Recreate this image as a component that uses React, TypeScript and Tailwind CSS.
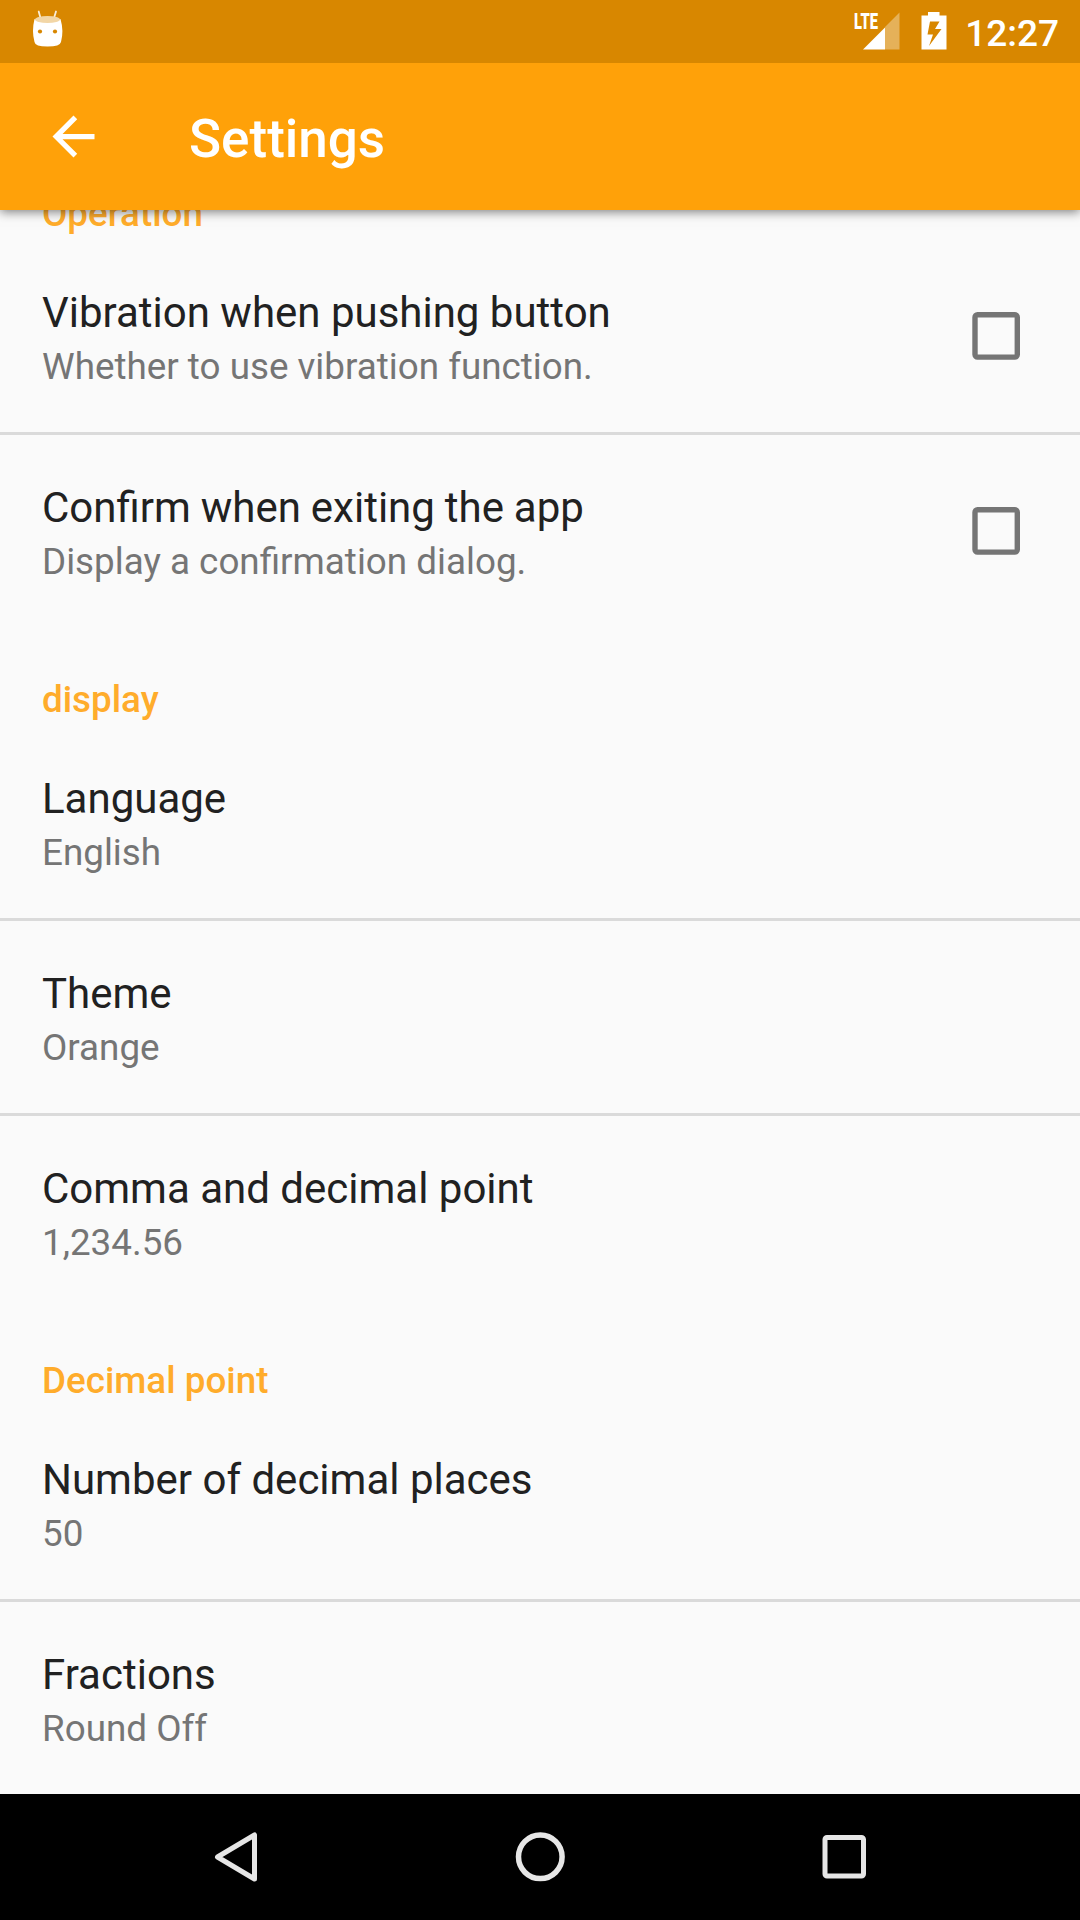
import React from "react";

function Category({ title, className = "" }: { title: string; className?: string }) {
  return (
    <div className={"shrink-0 px-[42px] text-[36.8px] font-medium leading-[43px] text-[#ffac2b] " + className}>
      {title}
    </div>
  );
}

type RowProps = {
  title: string;
  summary: string;
  checkbox?: boolean;
  divider?: boolean;
  titleClass?: string;
};

function Row({ title, summary, checkbox, divider, titleClass = "" }: RowProps) {
  return (
    <div className={"flex h-[195px] shrink-0 justify-between pl-[42px] pr-[60px] " + (divider ? "border-b-[3px] border-[#dadada]" : "")}>
      <div className="pt-[48px]">
        <div className={"text-[42px] leading-[49px] text-[#212121] whitespace-nowrap " + titleClass}>{title}</div>
        <div className="mt-[8px] text-[36.8px] leading-[43px] text-[#757575] whitespace-nowrap">{summary}</div>
      </div>
      {checkbox && (
        <svg className="mt-[72px] h-[48px] w-[48px]" viewBox="0 0 48 48" fill="none">
          <rect x="3" y="2.800" width="42.300" height="42.300" rx="2.500" stroke="#757575" strokeWidth="5.400" />
        </svg>
      )}
    </div>
  );
}

function DroidIcon() {
  return (
    <svg className="h-[63px] w-[63px]" viewBox="0 0 63 63" fill="none">
      <path d="M7.700 11.500 9.500 18M25 11.500 23 18" stroke="#fff" strokeOpacity="0.85" strokeWidth="1.800" strokeLinecap="round" />
      <path d="M3.500 19Q16.500 24 29.500 19Q33 31 30 42Q29 46.500 16.500 46.500Q4 46.500 3.500 42Q.5 31 3.500 19Z" fill="#fff" />
      <ellipse cx="16.500" cy="19.500" rx="12.500" ry="3.500" fill="#f2d6a6" />
      <circle cx="9" cy="31.500" r="2.100" fill="#d88700" />
      <circle cx="24" cy="31.500" r="2.100" fill="#d88700" />
    </svg>
  );
}

export default function App() {
  return (
    <div className="flex h-[1920px] w-[1080px] flex-col overflow-hidden bg-[#fafafa] font-['Roboto',sans-serif]">
      <div className="relative z-20 flex h-[63px] shrink-0 items-center justify-between bg-[#d88700] pl-[31px] pr-[21px] text-white">
        <DroidIcon />
        <div className="flex items-center">
          <div className="relative mr-[21px] h-[63px] w-[46px]">
            <svg className="h-[63px] w-[46px]" viewBox="0 0 46 63">
              <path d="M45.500 12.500V49.500H31V27Z" fill="#fff" fillOpacity=".35" />
              <path d="M31 27.500V49.500H9Z" fill="#fff" />
            </svg>
            <span className="absolute left-0 top-[10px] origin-left scale-x-[0.67] text-[22px] font-black leading-[24px]">LTE</span>
          </div>
          <svg className="mr-[18px] h-[63px] w-[26px]" viewBox="0 0 26 63">
            <path fillRule="evenodd" d="M7 12h11.500v3.500H25.500V49.500H.5V15.500H7ZM9 21.500 6.500 34.500h5.500L8 46 20.500 29h-6.500l4.500-7.500Z" fill="#fff" />
          </svg>
          <span className="mt-[3px] text-[37px] font-medium leading-[43px]">12:27</span>
        </div>
      </div>
      <header className="z-10 flex h-[147px] shrink-0 items-center bg-[#ffa109] pl-[42px] text-white shadow-[0_2px_10px_rgba(0,0,0,0.5)]">
        <svg className="mr-[84px] h-[63px] w-[63px]" viewBox="0 0 24 24" fill="#fff">
          <path d="M20 11H7.830l5.590-5.590L12 4l-8 8 8 8 1.410-1.410L7.830 13H20v-2z" />
        </svg>
        <h1 className="pt-[4px] text-[53px] font-medium leading-[62px]">Settings</h1>
      </header>
      <main className="flex min-h-0 grow flex-col overflow-hidden">
        <Category title="Operation" className="-mt-[18px] h-[48px]" />
        <Row title="Vibration when pushing button" summary="Whether to use vibration function." checkbox divider />
        <Row title="Confirm when exiting the app" summary="Display a confirmation dialog." checkbox titleClass="[word-spacing:-0.5px]" />
        <Category title="display" className="h-[96px] pt-[48px]" />
        <Row title="Language" summary="English" divider />
        <Row title="Theme" summary="Orange" divider />
        <Row title="Comma and decimal point" summary="1,234.56" />
        <Category title="Decimal point" className="h-[96px] pt-[48px]" />
        <Row title="Number of decimal places" summary="50" divider />
        <Row title="Fractions" summary="Round Off" />
      </main>
      <nav className="flex h-[126px] shrink-0 items-center justify-center gap-[241px] bg-black pb-[2px]">
        <svg className="h-[63px] w-[63px]" viewBox="0 0 63 63" fill="none" stroke="#e6e6e6" strokeWidth="5" strokeLinejoin="round">
          <path d="M49.500 10V54L12.500 32Z" />
        </svg>
        <svg className="h-[63px] w-[63px]" viewBox="0 0 63 63" fill="none" stroke="#e6e6e6" strokeWidth="5.500">
          <circle cx="31.300" cy="31.800" r="21.800" />
        </svg>
        <svg className="h-[63px] w-[63px]" viewBox="0 0 63 63" fill="none" stroke="#e6e6e6" strokeWidth="5">
          <rect x="12" y="12.500" width="38.500" height="38.500" rx="2" />
        </svg>
      </nav>
    </div>
  );
}
